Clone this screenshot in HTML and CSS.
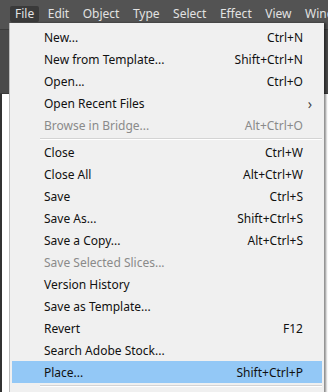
FILE: index.html
```html
<!DOCTYPE html>
<html lang="en">
<head>
  <meta charset="utf-8" />
  <title>File menu</title>
  <link rel="stylesheet" href="styles.css">
</head>
<body>

  <div class="menubar">
    <span class="top-item active">File</span>
    <span class="top-item">Edit</span>
    <span class="top-item">Object</span>
    <span class="top-item">Type</span>
    <span class="top-item">Select</span>
    <span class="top-item">Effect</span>
    <span class="top-item">View</span>
    <span class="top-item">Window</span>
  </div>

  <div class="workspace">
    <div class="toolbar"></div>
    <div class="canvas"></div>
  </div>

  <!-- File dropdown -->
  <div class="dropdown">
    <div class="item"><span>New...</span><span class="key">Ctrl+N</span></div>
    <div class="item"><span>New from Template...</span><span class="key">Shift+Ctrl+N</span></div>
    <div class="item"><span>Open...</span><span class="key">Ctrl+O</span></div>
    <div class="item"><span>Open Recent Files</span><span class="arrow">&#x203A;</span></div>
    <div class="item disabled"><span>Browse in Bridge...</span><span class="key">Alt+Ctrl+O</span></div>
    <div class="sep"></div>
    <div class="item"><span>Close</span><span class="key">Ctrl+W</span></div>
    <div class="item"><span>Close All</span><span class="key">Alt+Ctrl+W</span></div>
    <div class="item"><span>Save</span><span class="key">Ctrl+S</span></div>
    <div class="item"><span>Save As...</span><span class="key">Shift+Ctrl+S</span></div>
    <div class="item"><span>Save a Copy...</span><span class="key">Alt+Ctrl+S</span></div>
    <div class="item disabled"><span>Save Selected Slices...</span></div>
    <div class="item"><span>Version History</span></div>
    <div class="item"><span>Save as Template...</span></div>
    <div class="item"><span>Revert</span><span class="key">F12</span></div>
    <div class="item"><span>Search Adobe Stock...</span></div>
    <div class="item hover"><span>Place...</span><span class="key">Shift+Ctrl+P</span></div>
    <div class="sep"></div>
  </div>

</body>
</html>
```

FILE: styles.css
```css
:root {
  --bar:      #535353;
  --bar-dark: #3a3a3a;
  --bar-text: #e2e2e2;
  --menu-bg:  #f0f0f0;
  --text:     #111;
  --muted:    #8a8a8a;
  --hover:    #93c8f6;
  --line:     #d4d4d4;
}
*, *::before, *::after { box-sizing: border-box; margin:0; padding:0; }
body {
  font-family: "Noto Sans", "Noto Sans CJK KR", sans-serif;
  font-size: 12px;
  background: var(--bar);
  width:328px;height:392px;overflow:hidden;
  position:relative;
}

.menubar {
  height:30px;
  display:flex;align-items:flex-start;
  padding:6px 0 0 10px;
  border-bottom:1px solid #3c3c3c;
  white-space:nowrap;overflow:hidden;
}
.top-item {
  color:var(--bar-text);
  font-size:12px;line-height:16px;
  padding:0 5px;margin-right:3.5px;
  border-radius:2px;
}
.top-item.active { background:var(--bar-dark); }

.workspace { display:flex;flex-direction:column;height:calc(100% - 30px); }
.toolbar { height:64px;background:#4a4a4a;border-bottom:1px solid #3a3a3a; }
.canvas {
  flex:1;background:#fff;
  border-left:2px solid #323232;
}

/* Dropdown */
.dropdown {
  position:absolute;top:23px;left:9px;
  width:315px;height:380px;
  background:var(--menu-bg);
  border-left:1px solid #bdbdbd;
  padding:3px 2px 0 2px;
  box-shadow:2px 0 2px rgba(0,0,0,0.45);
}
.item {
  height:22px;
  display:flex;align-items:center;justify-content:space-between;
  padding:0 19px 0 32px;
  color:var(--text);
  white-space:nowrap;
}
.item.disabled { color:var(--muted); }
.item.hover { background:var(--hover); }
.item .arrow { font-size:14px;margin-right:-9px;color:#444; }

.sep {
  height:1px;background:var(--line);
  margin:2px 0 1px 28px;
  border-bottom:1px solid #fff;
  box-sizing:content-box;
}
```
